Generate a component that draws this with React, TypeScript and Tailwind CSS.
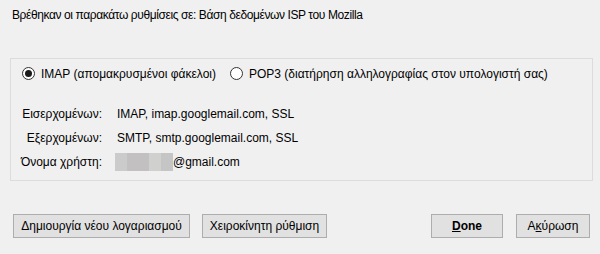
import React from 'react';

function Radio({ checked }: { checked?: boolean }) {
  return (
    <span className="flex h-[13px] w-[13px] items-center justify-center rounded-full border border-[#333333] bg-white">
      {checked ? <span className="h-[7px] w-[7px] rounded-full bg-[#1a1a1a]" /> : null}
    </span>
  );
}

function Row({ label, children }: { label: string; children: React.ReactNode }) {
  return (
    <div className="flex h-[24px] items-center">
      <div className="w-[91px] text-right">{label}</div>
      <div className="ml-[15px] flex items-center">{children}</div>
    </div>
  );
}

function Btn({ children, w }: { children: React.ReactNode; w: string }) {
  return (
    <button type="button" className={`h-[24px] ${w} border border-[#adadad] bg-[#e1e1e1] text-[12px] text-black`}>
      {children}
    </button>
  );
}

export default function App() {
  return (
    <div className="h-[254px] w-[600px] bg-[#f0f0f0] text-[12px] leading-none text-black" style={{ fontFamily: '"Liberation Sans", Arial, sans-serif' }}>
      <div className="pl-[12px] pt-[9px] tracking-[-0.4px]">Βρέθηκαν οι παρακάτω ρυθμίσεις σε: Βάση δεδομένων ISP του Mozilla</div>

      <div className="ml-[10px] mt-[37px] h-[123px] w-[583px] border border-[#dcdcdc]">
        <div className="flex items-center pl-[11px] pt-[8px]">
          <label className="flex items-center gap-[6px]">
            <Radio checked />
            <span>IMAP (απομακρυσμένοι φάκελοι)</span>
          </label>
          <label className="ml-[14px] flex items-center gap-[6px]">
            <Radio />
            <span>POP3 (διατήρηση αλληλογραφίας στον υπολογιστή σας)</span>
          </label>
        </div>

        <div className="mt-[22px]">
          <Row label="Εισερχομένων:">IMAP, imap.googlemail.com, SSL</Row>
          <Row label="Εξερχομένων:">SMTP, smtp.googlemail.com, SSL</Row>
          <Row label="Όνομα χρήστη:">
            <span className="-ml-[2px] flex h-[18px]">
              <span className="w-[12px] bg-[#cbcbcb]" />
              <span className="w-[22px] bg-[#c2c0c0]" />
              <span className="w-[12px] bg-[#d0d0cf]" />
              <span className="w-[12px] bg-[#c6c5c5]" />
            </span>
            <span>@gmail.com</span>
          </Row>
        </div>
      </div>

      <div className="mt-[33px] flex pl-[13px] pr-[10px]">
        <Btn w="w-[177px]">Δημιουργία νέου λογαριασμού</Btn>
        <div className="ml-[12px]">
          <Btn w="w-[125px]">Χειροκίνητη ρύθμιση</Btn>
        </div>
        <div className="ml-auto flex gap-[13px]">
          <Btn w="w-[72px]">
            <span className="font-bold"><span className="underline">D</span>one</span>
          </Btn>
          <Btn w="w-[74px]">
            Α<span className="underline">κ</span>ύρωση
          </Btn>
        </div>
      </div>
    </div>
  );
}
